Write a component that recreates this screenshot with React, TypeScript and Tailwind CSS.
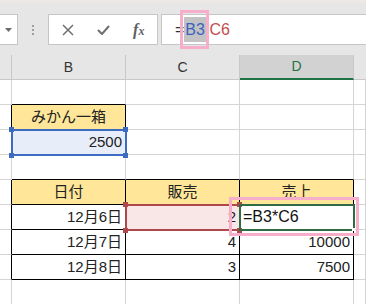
import React from 'react'

const font = { fontFamily: '"Liberation Sans", "Noto Sans CJK JP", sans-serif' }

type CellProps = {
  className: string
  children?: React.ReactNode
}

function Cell({ className, children }: CellProps) {
  return <div className={`flex items-center overflow-visible whitespace-nowrap ${className}`}>{children}</div>
}

const g = 'border-r border-b border-[#d4d4d4]'

export default function App() {
  return (
    <div className="w-[366px] h-[304px] overflow-hidden bg-white relative" style={font}>
      {/* top strip */}
      <div className="h-[3px] bg-[#ebe8e5]" />

      {/* formula toolbar */}
      <div className="h-[52px] bg-[#e6e6e6] flex items-start pt-[11px]">
        <div className="w-[18px] h-[31px] bg-white border border-[#c6c6c6] border-l-0 flex items-center justify-center">
          <svg width="7" height="4" viewBox="0 0 7 4">
            <path d="M0 0h7L3.5 4z" fill="#6b6b6b" />
          </svg>
        </div>
        <div className="w-[30px] h-[31px] flex flex-col items-center justify-center gap-[2px]">
          <span className="w-[2px] h-[2px] bg-[#9d9d9d]" />
          <span className="w-[2px] h-[2px] bg-[#9d9d9d]" />
          <span className="w-[2px] h-[2px] bg-[#9d9d9d]" />
        </div>
        <div className="w-[110px] h-[31px] bg-white border border-[#c6c6c6] flex items-center justify-around px-[1px]">
          <svg width="12" height="12" viewBox="0 0 12 12">
            <path d="M1 1l10 10M11 1L1 11" stroke="#6f6f6f" strokeWidth="1.5" />
          </svg>
          <svg width="13" height="10" viewBox="0 0 13 10">
            <path d="M1 5l4 4 7-8" stroke="#6f6f6f" strokeWidth="2" fill="none" />
          </svg>
          <span className="text-[16px] italic font-bold text-[#5f5f5f] leading-none" style={{ fontFamily: '"Liberation Serif", serif' }}>
            f<span className="text-[12px]">x</span>
          </span>
        </div>
        <div className="ml-[3px] flex-1 h-[31px] bg-white border border-[#c6c6c6] border-r-0 flex items-center pl-[13px] text-[16px] relative">
          <span className="text-[#333]">=</span>
          <span className="bg-[#c3c3c3] text-[#3b62c0] h-[25px] flex items-center px-[1px]">B3</span>
          <span className="text-[#999] text-[9px] -mt-[6px]">*</span>
          <span className="text-[#c0504d]">C6</span>
          <div className="absolute left-[18px] top-[-5px] w-[29px] h-[39px] border-[3px] border-[#f7aecb]" />
        </div>
      </div>

      {/* sheet grid */}
      <div className="relative">
        <div className="grid grid-cols-[12px_114px_114px_114px_12px] auto-rows-[25px] text-[15px] text-[#222]">
          {/* column headers */}
          <Cell className="bg-[#e6e6e6] border-r border-b border-[#c8c8c8]" />
          <Cell className="bg-[#e6e6e6] border-r border-b border-[#c8c8c8] justify-center text-[14px] text-[#333]">B</Cell>
          <Cell className="bg-[#e6e6e6] border-r border-b border-[#c8c8c8] justify-center text-[14px] text-[#333]">C</Cell>
          <Cell className="bg-[#d2d2d2] border-r border-r-[#c8c8c8] border-b-2 border-b-[#217346] justify-center text-[14px] text-[#217346]">D</Cell>
          <Cell className="bg-[#e6e6e6] border-b border-[#c8c8c8]" />

          {/* row 1 */}
          <Cell className={g} />
          <Cell className="border-r border-r-[#d4d4d4] border-b border-b-black" />
          <Cell className={g} />
          <Cell className={g} />
          <Cell className={g} />

          {/* row 2 */}
          <Cell className="border-r border-r-black border-b border-b-[#d4d4d4]" />
          <Cell className="bg-[#ffe699] border-r border-b border-black justify-center">みかん一箱</Cell>
          <Cell className={g} />
          <Cell className={g} />
          <Cell className={g} />

          {/* row 3 */}
          <Cell className="border-r border-r-black border-b border-b-[#d4d4d4]" />
          <Cell className="bg-[#e8eef9] border-r border-b border-black justify-end pr-[3px]">2500</Cell>
          <Cell className={g} />
          <Cell className={g} />
          <Cell className={g} />

          {/* row 4 */}
          <Cell className={g} />
          <Cell className="border-r border-r-[#d4d4d4] border-b border-b-black" />
          <Cell className="border-r border-r-[#d4d4d4] border-b border-b-black" />
          <Cell className="border-r border-r-[#d4d4d4] border-b border-b-black" />
          <Cell className={g} />

          {/* row 5 */}
          <Cell className="border-r border-r-black border-b border-b-[#d4d4d4]" />
          <Cell className="bg-[#ffe699] border-r border-b border-black justify-center">日付</Cell>
          <Cell className="bg-[#ffe699] border-r border-b border-black justify-center">販売</Cell>
          <Cell className="bg-[#ffe699] border-r border-b border-black justify-center">売上</Cell>
          <Cell className={g} />

          {/* row 6 */}
          <Cell className="border-r border-r-black border-b border-b-[#d4d4d4]" />
          <Cell className="border-r border-b border-black justify-end pr-[3px]">12月6日</Cell>
          <Cell className="bg-[#f9e6e6] border-r border-b border-black justify-end pr-[3px]">2</Cell>
          <Cell className="border-r border-b border-black pl-[3px] text-[16px] text-[#111]">=B3*C6</Cell>
          <Cell className={g} />

          {/* row 7 */}
          <Cell className="border-r border-r-black border-b border-b-[#d4d4d4]" />
          <Cell className="border-r border-b border-black justify-end pr-[3px]">12月7日</Cell>
          <Cell className="border-r border-b border-black justify-end pr-[3px]">4</Cell>
          <Cell className="border-r border-b border-black justify-end pr-[3px]">10000</Cell>
          <Cell className={g} />

          {/* row 8 */}
          <Cell className="border-r border-r-black border-b border-b-[#d4d4d4]" />
          <Cell className="border-r border-b border-black justify-end pr-[3px]">12月8日</Cell>
          <Cell className="border-r border-b border-black justify-end pr-[3px]">3</Cell>
          <Cell className="border-r border-b border-black justify-end pr-[3px]">7500</Cell>
          <Cell className={g} />

          {/* row 9 */}
          <Cell className={g} />
          <Cell className={g} />
          <Cell className={g} />
          <Cell className={g} />
          <Cell className={g} />
        </div>

        {/* B3 reference (blue) */}
        <div className="absolute left-[11px] top-[74px] w-[116px] h-[27px] border-2 border-[#3d6bc2]" />
        <span className="absolute left-[9px] top-[72px] w-[5px] h-[5px] bg-[#3d6bc2]" />
        <span className="absolute left-[123px] top-[72px] w-[5px] h-[5px] bg-[#3d6bc2]" />
        <span className="absolute left-[9px] top-[98px] w-[5px] h-[5px] bg-[#3d6bc2]" />
        <span className="absolute left-[123px] top-[98px] w-[5px] h-[5px] bg-[#3d6bc2]" />

        {/* C6 reference (red) */}
        <div className="absolute left-[125px] top-[149px] w-[116px] h-[27px] border-2 border-[#b0474a]" />
        <span className="absolute left-[123px] top-[147px] w-[5px] h-[5px] bg-[#b0474a]" />
        <span className="absolute left-[237px] top-[147px] w-[5px] h-[5px] bg-[#b0474a]" />
        <span className="absolute left-[123px] top-[173px] w-[5px] h-[5px] bg-[#b0474a]" />
        <span className="absolute left-[237px] top-[173px] w-[5px] h-[5px] bg-[#b0474a]" />

        {/* D6 editing cell (green) */}
        <div className="absolute left-[239px] top-[149px] w-[116px] h-[27px] border-2 border-[#2f6b43]" />
        <span className="absolute left-[352px] top-[173px] w-[3px] h-[3px] bg-white" />

        {/* annotation box */}
        <div className="absolute left-[229px] top-[142px] w-[130px] h-[39px] border-[3px] border-[#f7aecb]" />
      </div>
    </div>
  )
}
